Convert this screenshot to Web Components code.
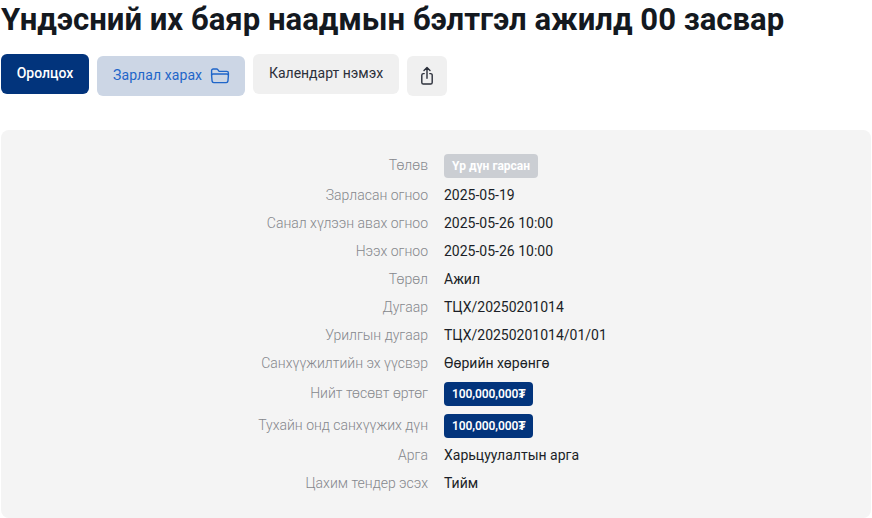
<!doctype html>
<html lang="mn">
<head>
<meta charset="utf-8">
<title>Тендер</title>
<style>
  html, body { margin: 0; background: #fff; }
  body { font-family: Roboto, "Liberation Sans", sans-serif; overflow: hidden; }
</style>
</head>
<body>
<tender-page>
  <h-title slot="title">Үндэсний их баяр наадмын бэлтгэл ажилд 00 засвар</h-title>
  <action-btn slot="actions" kind="primary">Оролцох</action-btn>
  <action-btn slot="actions" kind="soft" offset>Зарлал харах
    <svg slot="icon" width="20" height="20" viewBox="0 0 20 20" fill="none" stroke="#1f66c9" stroke-width="1.4" stroke-linejoin="round" stroke-linecap="round"><path d="M1.6 9V4.6C1.6 3.7 2.3 3 3.2 3h3.4c.5 0 .9.2 1.2.6l.9 1.2c.3.4.7.6 1.2.6h6.9c.9 0 1.6.7 1.6 1.6V9"/><path d="M3 8h14c.9 0 1.5.7 1.4 1.6l-.5 5.6c-.1.8-.8 1.4-1.6 1.4H3.7c-.8 0-1.5-.6-1.6-1.4l-.5-5.6C1.5 8.7 2.1 8 3 8z"/></svg>
  </action-btn>
  <action-btn slot="actions" kind="grey">Календарт нэмэх</action-btn>
  <action-btn slot="actions" kind="icon" offset>
    <svg slot="icon" width="20" height="20" viewBox="0 0 20 20" fill="none" stroke="#2b2f3a" stroke-width="1.4" stroke-linejoin="round" stroke-linecap="round"><path d="M10 12.2V1.8M7 4.6l3-3 3 3"/><path d="M7.2 7.6H6.4c-.9 0-1.6.7-1.6 1.6v7.2c0 .9.7 1.6 1.6 1.6h7.2c.9 0 1.6-.7 1.6-1.6V9.2c0-.9-.7-1.6-1.6-1.6h-.8"/></svg>
  </action-btn>

  <info-row slot="rows" label="Төлөв" tall><info-tag kind="muted">Үр дүн гарсан</info-tag></info-row>
  <info-row slot="rows" label="Зарласан огноо">2025-05-19</info-row>
  <info-row slot="rows" label="Санал хүлээн авах огноо">2025-05-26 10:00</info-row>
  <info-row slot="rows" label="Нээх огноо">2025-05-26 10:00</info-row>
  <info-row slot="rows" label="Төрөл">Ажил</info-row>
  <info-row slot="rows" label="Дугаар">ТЦХ/20250201014</info-row>
  <info-row slot="rows" label="Урилгын дугаар">ТЦХ/20250201014/01/01</info-row>
  <info-row slot="rows" label="Санхүүжилтийн эх үүсвэр">Өөрийн хөрөнгө</info-row>
  <info-row slot="rows" label="Нийт төсөвт өртөг" tall><info-tag kind="money">100,000,000₮</info-tag></info-row>
  <info-row slot="rows" label="Тухайн онд санхүүжих дүн" tall><info-tag kind="money">100,000,000₮</info-tag></info-row>
  <info-row slot="rows" label="Арга">Харьцуулалтын арга</info-row>
  <info-row slot="rows" label="Цахим тендер эсэх">Тийм</info-row>
</tender-page>

<script>
class TenderPage extends HTMLElement {
  constructor() {
    super();
    const shadow = this.attachShadow({mode: 'open'});
    shadow.innerHTML = `
      <style>
        :host {
          display: block;
          padding: 0 1px;
          height: 518px;
          box-sizing: border-box;
        }
        #actions {
          display: flex;
          align-items: flex-start;
          gap: 8px;
          margin-top: 14px;
          height: 42px;
        }
        #panel {
          margin-top: 34px;
          background: #f4f4f4;
          border-radius: 8px;
          padding: 20px 0 20px;
          display: flex;
          flex-direction: column;
        }
      </style>
      <slot name="title"></slot>
      <div id="actions"><slot name="actions"></slot></div>
      <div id="panel"><slot name="rows"></slot></div>
    `;
  }
}
customElements.define('tender-page', TenderPage);

class HTitle extends HTMLElement {
  constructor() {
    super();
    const shadow = this.attachShadow({mode: 'open'});
    shadow.innerHTML = `
      <style>
        :host {
          display: block;
          height: 40px;
          font-size: 31.1px;
          line-height: 40px;
          font-weight: 700;
          color: #14191f;
          white-space: nowrap;
        }
      </style>
      <slot></slot>
    `;
  }
}
customElements.define('h-title', HTitle);

class ActionBtn extends HTMLElement {
  constructor() {
    super();
    const shadow = this.attachShadow({mode: 'open'});
    shadow.innerHTML = `
      <style>
        :host {
          display: inline-flex;
          align-items: center;
          justify-content: center;
          gap: 9px;
          height: 40px;
          box-sizing: border-box;
          border-radius: 6px;
          font-size: 14px;
          white-space: nowrap;
        }
        :host([offset]) { margin-top: 2px; }
        :host([kind="primary"]) {
          width: 88px;
          background: #02347c;
          color: #fff;
          font-weight: 500;
        }
        :host([kind="soft"]) {
          width: 148px;
          padding-left: 16px;
          justify-content: flex-start;
          gap: 8px;
          background: #ccd6e5;
          color: #1f66c9;
          letter-spacing: .1px;
        }
        :host([kind="grey"]) {
          width: 146px;
          background: #f0f0f0;
          color: #2b2f3a;
        }
        :host([kind="icon"]) {
          width: 40px;
          background: #f0f0f0;
        }
        #text { margin-bottom: 2px; }
        :host([kind="icon"]) #text { display: none; }
        ::slotted(svg) { display: block; }
      </style>
      <div id="text"><slot></slot></div><slot name="icon"></slot>
    `;
  }
}
customElements.define('action-btn', ActionBtn);

class InfoRow extends HTMLElement {
  constructor() {
    super();
    const shadow = this.attachShadow({mode: 'open'});
    shadow.innerHTML = `
      <style>
        :host {
          display: grid;
          grid-template-columns: 427px 1fr;
          column-gap: 16px;
          align-items: center;
          height: 28px;
          font-size: 14px;
          color: #1b1f27;
        }
        :host([tall]) { height: 32px; }
        :host(:not([tall])) #value { margin-bottom: 2px; }
        #label {
          text-align: right;
          color: #85878c;
          font-weight: 300;
          margin-bottom: 2px;
        }
      </style>
      <div id="label"></div>
      <div id="value"><slot></slot></div>
    `;
    shadow.getElementById('label').textContent = this.getAttribute('label');
  }
}
customElements.define('info-row', InfoRow);

class InfoTag extends HTMLElement {
  constructor() {
    super();
    const shadow = this.attachShadow({mode: 'open'});
    shadow.innerHTML = `
      <style>
        :host {
          display: inline-block;
          vertical-align: middle;
          height: 24px;
          line-height: 24px;
          padding: 0 8px;
          border-radius: 4px;
          background: #02347c;
          color: #fff;
          font-size: 12px;
          font-weight: 700;
          white-space: nowrap;
        }
        :host([kind="muted"]) { background: #cbced3; }
        :host([kind="money"]) { font-weight: 600; letter-spacing: -.1px; }
      </style>
      <slot></slot>
    `;
  }
}
customElements.define('info-tag', InfoTag);
</script>
</body>
</html>
